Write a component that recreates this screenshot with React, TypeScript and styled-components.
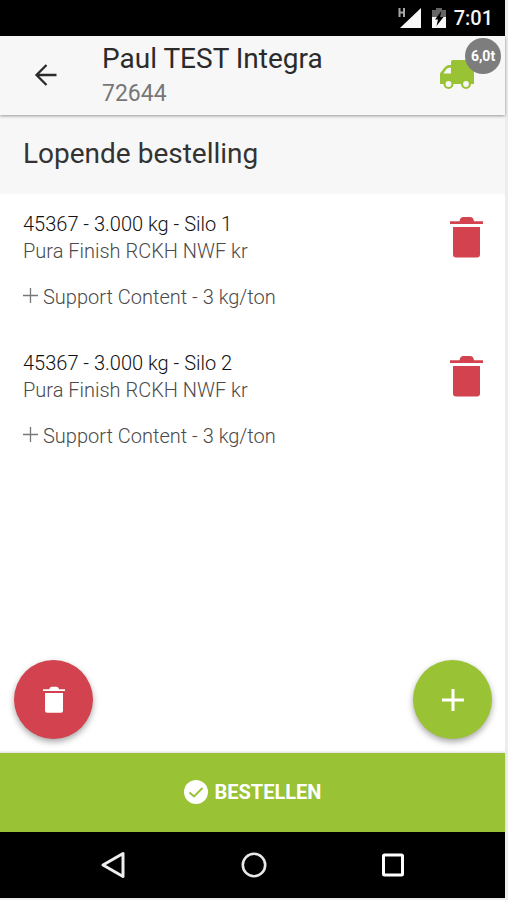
import React from "react";
import styled, { createGlobalStyle } from "styled-components";

const GREEN = "#99c235";
const RED = "#d2434f";

const GlobalStyle = createGlobalStyle`
  * { box-sizing: border-box; }
  body {
    margin: 0;
    background: #ededed;
    font-family: Roboto, "Liberation Sans", sans-serif;
    color: #333;
  }
  button {
    margin: 0;
    padding: 0;
    border: 0;
    background: none;
    font: inherit;
    color: inherit;
    cursor: pointer;
  }
  h1, h2, p, ul { margin: 0; padding: 0; }
  svg { display: block; }
`;

const Frame = styled.div`
  min-height: 100vh;
  padding: 0 3px 2px 0;
  display: flex;
  flex-direction: column;
  background: #ededed;
`;

const StatusBar = styled.div`
  height: 36px;
  padding-right: 12px;
  display: flex;
  align-items: center;
  justify-content: flex-end;
  background: #000;
  color: #f4f4f4;
`;

const Clock = styled.time`
  margin-left: 8px;
  font-size: 20px;
  font-weight: 500;
  line-height: 36px;
`;

const BatterySlot = styled.span`
  margin-left: 10px;
`;

const Header = styled.header`
  position: relative;
  z-index: 1;
  height: 79px;
  padding: 0 31px 2px 34px;
  display: flex;
  align-items: center;
  background: #f7f7f7;
  box-shadow: 0 1px 3px rgba(0, 0, 0, 0.4);
`;

const BackButton = styled.button`
  width: 24px;
  height: 24px;
`;

const Customer = styled.div`
  flex: 1;
  margin-left: 44px;
  padding-top: 2px;
`;

const CustomerName = styled.h1`
  font-size: 28px;
  font-weight: 400;
  line-height: 36px;
  color: #2b2b2b;
`;

const CustomerNumber = styled.p`
  font-size: 23px;
  line-height: 34px;
  color: #777;
`;

const TruckButton = styled.button`
  position: relative;
  width: 34px;
  height: 31px;
`;

const Badge = styled.span`
  position: absolute;
  top: -21px;
  right: -27px;
  width: 36px;
  height: 36px;
  border-radius: 50%;
  background: #7d7d7d;
  color: #fff;
  font-size: 14px;
  font-weight: 700;
  line-height: 36px;
  text-align: center;
`;

const Main = styled.main`
  flex: 1;
  display: flex;
  flex-direction: column;
  background: #fff;
`;

const SectionTitle = styled.h2`
  padding: 19px 23px 20px;
  font-size: 28px;
  font-weight: 400;
  line-height: 40px;
  color: #333;
  background: #f7f7f7;
`;

const OrderList = styled.ul`
  list-style: none;
`;

const OrderRow = styled.li`
  padding: 17px 22px 22px 23px;
  display: flex;
  justify-content: space-between;
  align-items: flex-start;
`;

const OrderLine = styled.p<{ $strong?: boolean }>`
  font-size: 20px;
  line-height: 27px;
  font-weight: 300;
  color: ${(p) => (p.$strong ? "#111" : "#4a4a4a")};
`;

const Addition = styled.p`
  margin-top: 19px;
  display: flex;
  gap: 5px;
  font-size: 20px;
  font-weight: 300;
  line-height: 27px;
  color: #4a4a4a;
`;

const PlusSlot = styled.span`
  padding-top: 4px;
`;

const RemoveButton = styled.button`
  margin-top: 5px;
`;

const FloatingActions = styled.div`
  margin-top: auto;
  padding: 0 13px 14px 14px;
  display: flex;
  justify-content: space-between;
`;

const FloatingButton = styled.button<{ $color: string }>`
  width: 79px;
  height: 79px;
  display: flex;
  align-items: center;
  justify-content: center;
  border-radius: 50%;
  background: ${(p) => p.$color};
  box-shadow: 0 3px 6px rgba(0, 0, 0, 0.35);
`;

const OrderButton = styled.button`
  height: 79px;
  padding-bottom: 2px;
  display: flex;
  align-items: center;
  justify-content: center;
  gap: 7px;
  background: ${GREEN};
  color: #fff;
  font-size: 20px;
  font-weight: 700;
  box-shadow: 0 -1px 2px rgba(0, 0, 0, 0.15);
`;

const SystemNav = styled.nav`
  height: 66px;
  padding: 0 100px;
  display: flex;
  align-items: center;
  justify-content: space-between;
  background: #000;
`;

const TrashIcon = ({ width, height, fill }: { width: number; height: number; fill: string }) => (
  <svg width={width} height={height} viewBox="0 0 33 42" preserveAspectRatio="none" fill={fill} aria-hidden="true">
    <path d="M0 5.2h9.5C10 2.4 11.200 1 13.500 1h6.500c2.300 0 3.500 1.400 4 4.200h9v2.700H0z" />
    <path d="M3 11h27v27.500q0 3-3 3H6q-3 0-3-3z" />
  </svg>
);

const orders = [
  { title: "45367 - 3.000 kg - Silo 1", product: "Pura Finish RCKH NWF kr", addition: "Support Content - 3 kg/ton" },
  { title: "45367 - 3.000 kg - Silo 2", product: "Pura Finish RCKH NWF kr", addition: "Support Content - 3 kg/ton" },
];

export default function App() {
  return (
    <>
      <GlobalStyle />
      <Frame>
        <StatusBar>
          <svg width="24" height="22" viewBox="0 0 24 22" aria-hidden="true">
            <path d="M23 1v20H2z" fill="#f8f8f8" />
            <path d="M1.500 1v9M6 1v9M1.500 5.500H6" stroke="#000" strokeWidth="4" />
            <path d="M1.500 1v9M6 1v9M1.500 5.500H6" stroke="#a5a5a5" strokeWidth="2" />
          </svg>
          <BatterySlot>
            <svg width="14" height="22" viewBox="0 0 14 22" aria-hidden="true">
              <path d="M0 3h4V1h6v2h4v8H0z" fill="#666" />
              <path d="M0 10h14v11H0z" fill="#f8f8f8" />
              <path d="M9.500 4L3 12.500h3L4.500 19l7-9H8z" fill="#000" />
            </svg>
          </BatterySlot>
          <Clock>7:01</Clock>
        </StatusBar>
        <Header>
          <BackButton aria-label="Terug">
            <svg width="24" height="24" viewBox="0 0 24 24" fill="none" stroke="#2b2b2b" strokeWidth="2.300" aria-hidden="true">
              <path d="M22.500 12H3M12.500 2L2.500 12l10 10" />
            </svg>
          </BackButton>
          <Customer>
            <CustomerName>Paul TEST Integra</CustomerName>
            <CustomerNumber>72644</CustomerNumber>
          </Customer>
          <TruckButton aria-label="Vracht 6,0t">
            <svg width="34" height="31" viewBox="0 0 34 31" aria-hidden="true">
              <path d="M11 3q0-2 2-2h19q2 0 2 2v22H0V15q0-1 1-2l4-5q2-2 4-2h2z" fill={GREEN} />
              <path d="M3.500 14.500L6.500 10q1-1.500 4.500-1.500v6z" fill="#f7f7f7" />
              <circle cx="8.500" cy="25" r="5" fill={GREEN} />
              <circle cx="26" cy="25" r="5" fill={GREEN} />
              <circle cx="8.500" cy="25" r="2.900" fill="#f7f7f7" />
              <circle cx="26" cy="25" r="2.900" fill="#f7f7f7" />
            </svg>
            <Badge>6,0t</Badge>
          </TruckButton>
        </Header>
        <Main>
          <SectionTitle>Lopende bestelling</SectionTitle>
          <OrderList>
            {orders.map((order) => (
              <OrderRow key={order.title}>
                <div>
                  <OrderLine $strong>{order.title}</OrderLine>
                  <OrderLine>{order.product}</OrderLine>
                  <Addition>
                    <PlusSlot>
                      <svg width="15" height="15" viewBox="0 0 15 15" stroke="#777" strokeWidth="1.300" aria-hidden="true">
                        <path d="M0 7.500h15M7.500 0v15" />
                      </svg>
                    </PlusSlot>
                    {order.addition}
                  </Addition>
                </div>
                <RemoveButton aria-label={`Verwijder ${order.title}`}>
                  <TrashIcon width={33} height={42} fill={RED} />
                </RemoveButton>
              </OrderRow>
            ))}
          </OrderList>
          <FloatingActions>
            <FloatingButton $color={RED} aria-label="Bestelling verwijderen">
              <TrashIcon width={22} height={27} fill="#fff" />
            </FloatingButton>
            <FloatingButton $color={GREEN} aria-label="Toevoegen">
              <svg width="24" height="24" viewBox="0 0 24 24" stroke="#fff" strokeWidth="3" aria-hidden="true">
                <path d="M1 12h22M12 1v22" />
              </svg>
            </FloatingButton>
          </FloatingActions>
        </Main>
        <OrderButton>
          <svg width="24" height="24" viewBox="0 0 24 24" aria-hidden="true">
            <circle cx="12" cy="12" r="12" fill="#fff" />
            <path d="M5.500 12.500l4.500 4L18.500 8" fill="none" stroke={GREEN} strokeWidth="2" />
          </svg>
          BESTELLEN
        </OrderButton>
        <SystemNav>
          <button aria-label="Vorige">
            <svg width="26" height="28" viewBox="0 0 26 28" fill="none" stroke="#eee" strokeWidth="3" strokeLinejoin="round" aria-hidden="true">
              <path d="M23 2.500v23L3 14z" />
            </svg>
          </button>
          <button aria-label="Startscherm">
            <svg width="26" height="26" viewBox="0 0 26 26" fill="none" stroke="#e8e8e8" strokeWidth="2.600" aria-hidden="true">
              <circle cx="13" cy="13" r="11.200" />
            </svg>
          </button>
          <button aria-label="Overzicht">
            <svg width="24" height="24" viewBox="0 0 24 24" fill="none" stroke="#fff" strokeWidth="3" aria-hidden="true">
              <rect x="2.500" y="2" width="19" height="20" rx="1" />
            </svg>
          </button>
        </SystemNav>
      </Frame>
    </>
  );
}
